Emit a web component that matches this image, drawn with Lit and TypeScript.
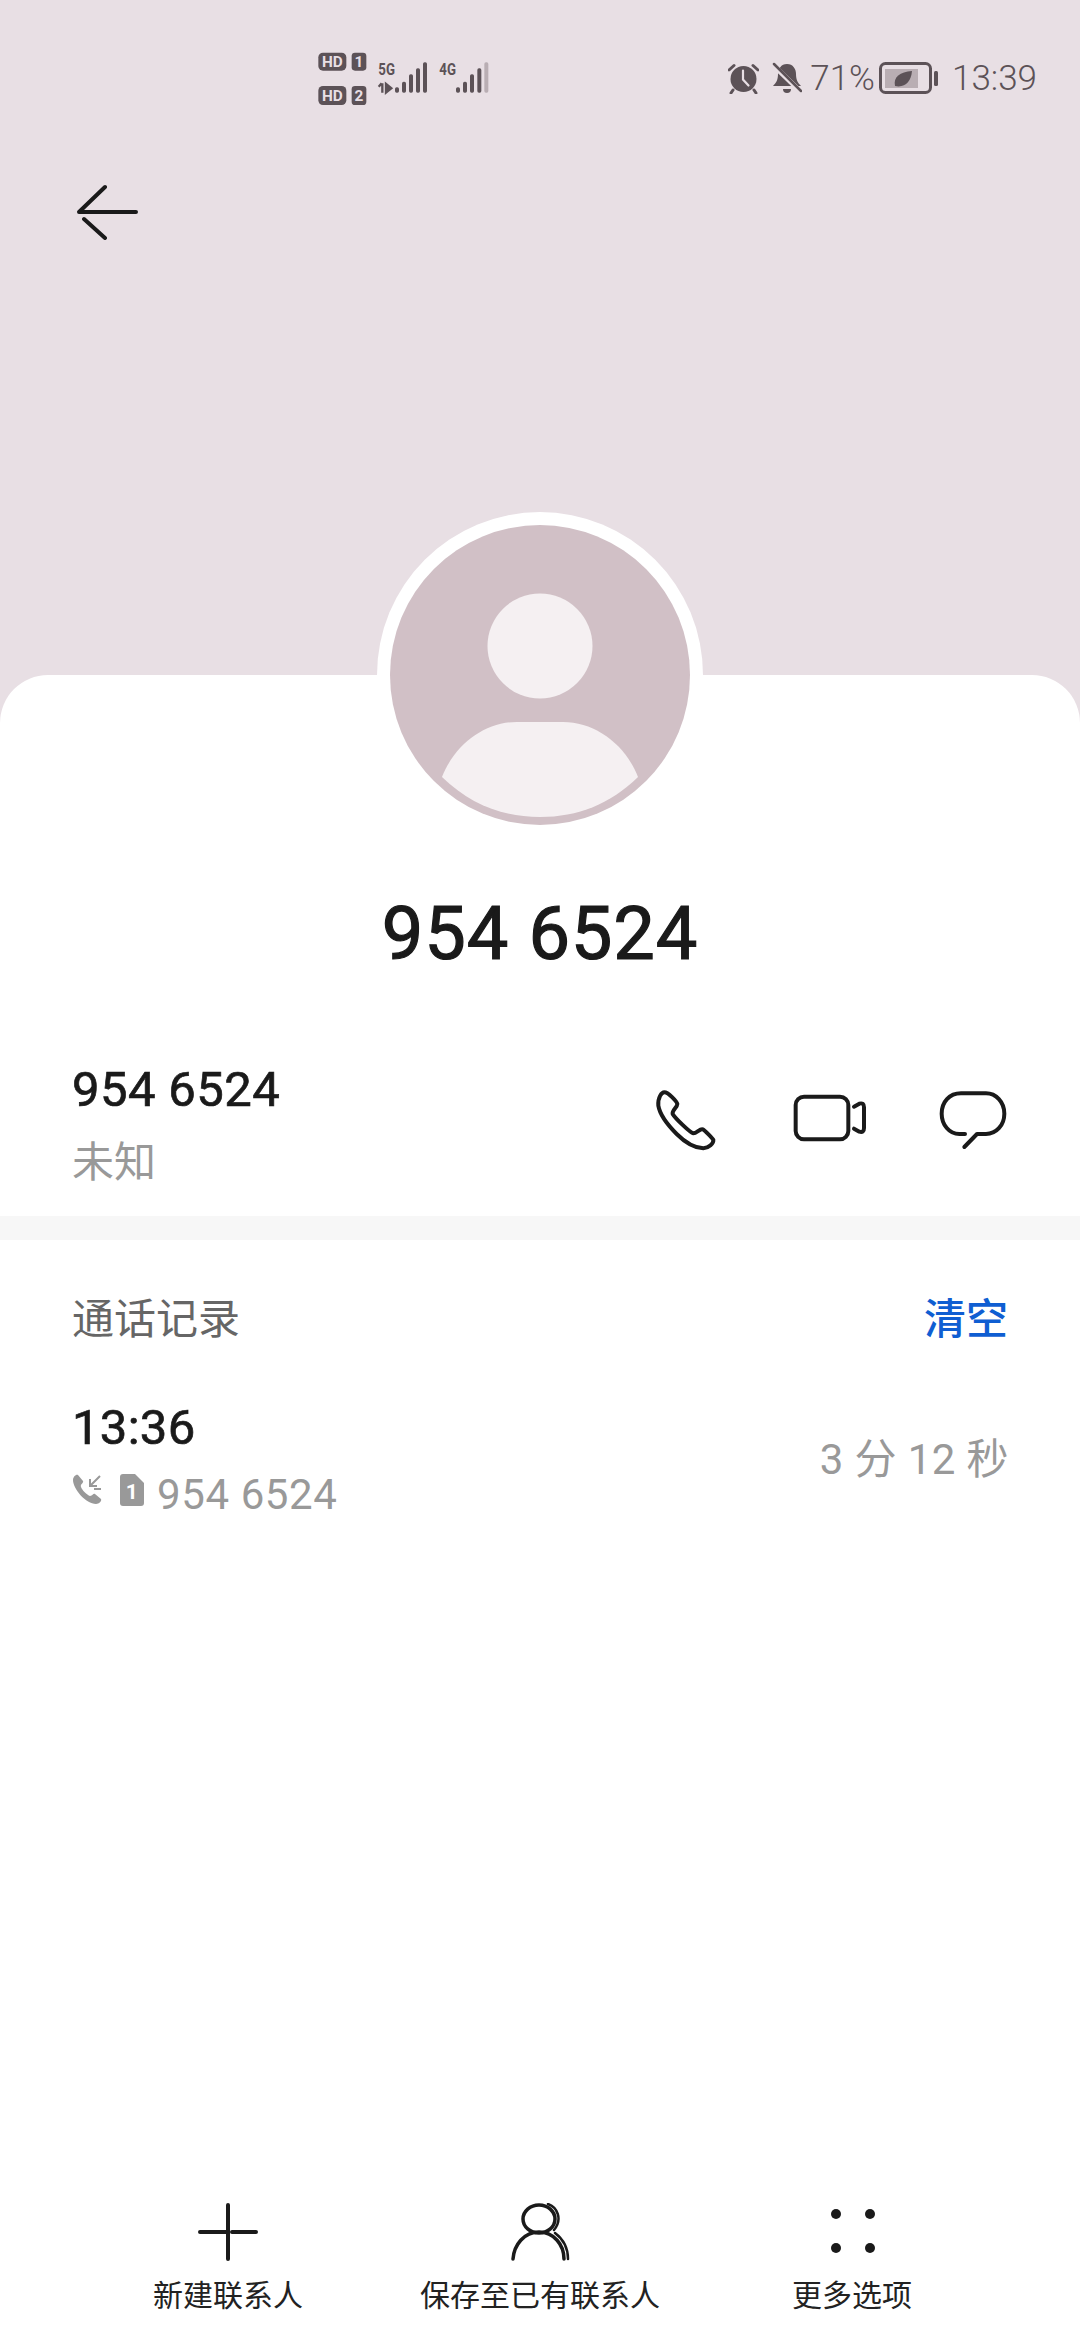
import { LitElement, html, css } from "lit";
import { customElement } from "lit/decorators.js";

@customElement("app-root")
export class AppRoot extends LitElement {
  static styles = css`
    :host {
      display: block;
      width: 1080px;
      height: 2340px;
      font-family: Roboto, "Noto Sans CJK SC", sans-serif;
      color: #1a1a1a;
    }
    svg { display: block; flex: none; }
    .page {
      width: 1080px;
      height: 2340px;
      display: flex;
      flex-direction: column;
      background: #e8dfe4;
      overflow: hidden;
    }
    .head { height: 675px; flex: none; }
    .status {
      height: 90px;
      padding: 30px 43px 0 300px;
      display: flex;
      justify-content: space-between;
      color: #5c5257;
    }
    .status-right {
      display: flex;
      align-items: center;
      height: 46px;
      margin-top: 25px;
      font-size: 35px;
      font-weight: 300;
    }
    .pct { margin: 0 4px 0 8px; }
    .clock { margin-left: 14px; }
    .alarm { margin-right: 13px; }
    .back { margin: 64px 0 0 76px; }

    .card {
      flex: 1;
      background: #fff;
      border-radius: 48px 48px 0 0;
      position: relative;
      display: flex;
      flex-direction: column;
    }
    .avatar {
      position: absolute;
      left: 377px;
      top: -163px;
    }
    .name {
      margin-top: 217px;
      height: 84px;
      line-height: 84px;
      text-align: center;
      font-size: 74px;
      letter-spacing: 0.9px;
      -webkit-text-stroke: 1.2px #1a1a1a;
    }
    .contact {
      margin-top: 79px;
      padding: 0 69px 0 72px;
      height: 146px;
      display: flex;
      justify-content: space-between;
    }
    .number {
      font-size: 49px;
      line-height: 70px;
      letter-spacing: 0.4px;
      -webkit-text-stroke: 0.7px #1a1a1a;
    }
    .tag { font-size: 42px; line-height: 76px; color: #999; }
    .actions { display: flex; padding-top: 35px; }
    .actions .phone { margin: -1px 74px 0 -2px; }
    .actions .video { margin: 4px 72px 0 0; }
    .rule { height: 24px; background: #f7f7f7; margin-top: 15px; flex: none; }
    .log-title {
      margin-top: 52px;
      padding: 0 72px;
      display: flex;
      justify-content: space-between;
      font-size: 42px;
      line-height: 56px;
      color: #666;
    }
    .clear { color: #0f5ed2; font-weight: 500; }
    .log-row {
      margin-top: 50px;
      padding: 0 71px 0 72px;
      display: flex;
      justify-content: space-between;
      align-items: center;
    }
    .log-time {
      font-size: 49px;
      line-height: 60px;
      letter-spacing: 0.3px;
      -webkit-text-stroke: 0.7px #1a1a1a;
    }
    .log-sub {
      display: flex;
      align-items: center;
      gap: 13px;
      margin-top: 7px;
      font-size: 42px;
      line-height: 60px;
      letter-spacing: 0.6px;
      color: #999;
    }
    .log-icons { display: flex; gap: 16px; margin-top: -10px; }
    .dur { font-size: 42px; color: #999; letter-spacing: 0.4px; margin-bottom: 13px; }

    .nav {
      margin-top: auto;
      height: 137px;
      padding-top: 10px;
      display: grid;
      grid-template-columns: 312px 312px 312px;
      justify-content: center;
    }
    .nav-item {
      display: flex;
      flex-direction: column;
      align-items: center;
      gap: 15px;
      font-size: 30px;
      line-height: 40px;
      color: #222;
    }
  `;

  private statusLeft() {
    return html`<svg width="220" height="90" viewBox="0 0 660 270" fill="#5c5257">
      <rect x="55" y="68" width="84" height="54" rx="14" />
      <rect x="155" y="68" width="44" height="54" rx="10" />
      <rect x="55" y="168" width="84" height="57" rx="14" />
      <rect x="155" y="168" width="44" height="57" rx="10" />
      <g font-family="Roboto, sans-serif" font-weight="700" text-anchor="middle" fill="#e8dfe4" font-size="46">
        <text x="97" y="112">HD</text>
        <text x="177" y="112">1</text>
        <text x="97" y="214">HD</text>
        <text x="177" y="214">2</text>
      </g>
      <g font-family="Roboto, sans-serif" font-weight="700" font-size="50">
        <text x="235" y="136" textLength="50" lengthAdjust="spacingAndGlyphs">5G</text>
        <text x="418" y="136" textLength="50" lengthAdjust="spacingAndGlyphs">4G</text>
      </g>
      <path d="M247 160v28M236 170l9-10M258 162l16 13-16 13z" stroke="#5c5257" stroke-width="7" />
      <rect x="285" y="172" width="12" height="16" rx="5" />
      <rect x="306" y="155" width="12" height="33" rx="5" />
      <rect x="327" y="133" width="12" height="55" rx="5" />
      <rect x="348" y="115" width="12" height="73" rx="5" />
      <rect x="369" y="97" width="12" height="91" rx="5" />
      <rect x="468" y="172" width="12" height="16" rx="5" />
      <rect x="489" y="155" width="12" height="33" rx="5" />
      <rect x="510" y="133" width="12" height="55" rx="5" />
      <rect x="532" y="115" width="12" height="73" rx="5" />
      <rect x="553" y="97" width="12" height="91" rx="5" fill="#b9aeb3" />
    </svg>`;
  }

  private statusRight() {
    return html`<div class="status-right">
      <svg class="alarm" width="31" height="31" viewBox="0 0 31 31" fill="#5c5257">
        <circle cx="15.5" cy="16" r="13" />
        <path d="M1 7 6 2.5M30 7 25 2.5M5 27 3 30M26 27 28 30" stroke="#5c5257" stroke-width="3" stroke-linecap="round" />
        <path d="M15 7.500v9l5.500 6" fill="none" stroke="#e8dfe4" stroke-width="2.200" stroke-linecap="round" />
      </svg>
      <svg width="30" height="32" viewBox="0 0 30 32" fill="#5c5257">
        <path d="M15 2c6 0 9 5 9 10 0 6 2 9 5 12H1c3-3 5-6 5-12 0-5 3-10 9-10z" />
        <path d="M11 27h8a4 4 0 0 1-8 0z" />
        <path d="M1 3 29 30" stroke="#e8dfe4" stroke-width="5" />
        <path d="M2 2 29 29" stroke="#5c5257" stroke-width="2.500" stroke-linecap="round" />
      </svg>
      <span class="pct">71%</span>
      <svg width="59" height="32" viewBox="0 0 59 32">
        <rect x="1.500" y="1.500" width="50" height="29" rx="5" fill="none" stroke="#5c5257" stroke-width="3" />
        <rect x="6" y="7" width="33" height="19" fill="#b9aeb3" />
        <path d="M16 24c-2-9 5-14 17-15-1 11-7 17-17 15z" fill="#5c5257" />
        <rect x="55" y="9" width="4" height="15" rx="1.500" fill="#5c5257" />
      </svg>
      <span class="clock">13:39</span>
    </div>`;
  }

  private avatar() {
    return html`<svg class="avatar" width="326" height="326" viewBox="0 0 326 326">
      <circle cx="163" cy="163" r="163" fill="#fff" />
      <circle cx="163" cy="163" r="150" fill="#d1c0c6" />
      <circle cx="163" cy="134" r="52.500" fill="#f5f0f2" />
      <path d="M65 265C78 232 108 210 140 210h46c32 0 62 22 75 55-28 27-60 40-98 40s-70-13-98-40z" fill="#f5f0f2" />
    </svg>`;
  }

  render() {
    return html`<div class="page">
      <div class="head">
        <div class="status">${this.statusLeft()}${this.statusRight()}</div>
        <svg class="back" width="62" height="56" viewBox="0 0 62 56" fill="none" stroke="#1a1a1a" stroke-width="4" stroke-linecap="round" stroke-linejoin="round">
          <path d="M60 28H3L29 3M8 35 29 54" />
        </svg>
      </div>
      <div class="card">
        ${this.avatar()}
        <div class="name">954 6524</div>
        <div class="contact">
          <div>
            <div class="number">954 6524</div>
            <div class="tag">未知</div>
          </div>
          <div class="actions">
            <svg class="phone" width="64" height="64" viewBox="100 85 192 192" fill="none" stroke="#1a1a1a" stroke-width="12" stroke-linejoin="round">
              <path d="M128 95C120 95 108 110 110 135 115 165 140 195 165 220 190 245 220 262 245 263 262 262 276 248 275 238 272 232 250 210 243 206 235 203 225 218 215 218 205 216 160 172 153 160 150 150 167 140 167 130 165 122 140 95 128 95Z" />
            </svg>
            <svg class="video" width="74" height="54" viewBox="514 108 222 162" fill="none" stroke="#1a1a1a" stroke-width="12" stroke-linecap="round" stroke-linejoin="round">
              <rect x="522" y="116" width="158" height="128" rx="25" />
              <path d="M697 146 713 137Q727 133 727 148V210Q727 225 713 221L697 212" />
            </svg>
            <svg width="72" height="60" viewBox="954 94 216 180" fill="none" stroke="#1a1a1a" stroke-width="12" stroke-linecap="round" stroke-linejoin="round">
              <path d="M1032 226H1015C985 226 962 198 962 165 962 130 985 104 1020 104H1095C1125 104 1150 130 1150 165 1150 200 1125 226 1095 226H1068L1030 265" />
            </svg>
          </div>
        </div>
        <div class="rule"></div>
        <div class="log-title"><span>通话记录</span><span class="clear">清空</span></div>
        <div class="log-row">
          <div>
            <div class="log-time">13:36</div>
            <div class="log-sub">
              <div class="log-icons">
                <svg width="32" height="32" viewBox="0 0 32 32" fill="#999">
                  <path d="M6 1 11 7c1 2-3 3-2 6 1 3 6 8 9 9 3 0 3-3 5-2l6 5c1 2-2 5-5 5C14 30 1 15 1 6 1 3 4 0 6 1z" />
                  <path d="M28 2 18 12M18 5v7h7M22 15h7" fill="none" stroke="#999" stroke-width="2" />
                </svg>
                <svg width="24" height="32" viewBox="0 0 24 32" fill="#999">
                  <path d="M3 0h12l9 9v20a3 3 0 0 1-3 3H3a3 3 0 0 1-3-3V3a3 3 0 0 1 3-3z" />
                  <text x="12" y="25" text-anchor="middle" font-family="Roboto, sans-serif" font-weight="700" font-size="21" fill="#fff">1</text>
                </svg>
              </div>
              <span>954 6524</span>
            </div>
          </div>
          <div class="dur">3 分 12 秒</div>
        </div>
        <div class="nav">
          <div class="nav-item">
            <svg width="60" height="58" viewBox="0 0 60 58" fill="none" stroke="#1a1a1a" stroke-width="4" stroke-linecap="round">
              <path d="M30 2V56M2 29H29M34 29H58" />
            </svg>
            <span>新建联系人</span>
          </div>
          <div class="nav-item">
            <svg width="62" height="58" viewBox="-1 0 62 58" fill="none" stroke="#1a1a1a" stroke-width="3.500" stroke-linecap="round">
              <ellipse cx="29" cy="16" rx="16" ry="14" />
              <path d="M3 56C4 42 14 29 29 29S54 42 54 56" />
              <path d="M38 1C47 4 53 16 44 27M45 30C53 36 58 45 58 56" stroke-width="2.500" />
            </svg>
            <span>保存至已有联系人</span>
          </div>
          <div class="nav-item">
            <svg width="60" height="58" viewBox="0 0 60 58" fill="#1a1a1a">
              <circle cx="14" cy="11" r="5" />
              <circle cx="48" cy="11" r="5" />
              <circle cx="14" cy="45" r="5" />
              <circle cx="48" cy="45" r="5" />
            </svg>
            <span>更多选项</span>
          </div>
        </div>
      </div>
    </div>`;
  }
}
